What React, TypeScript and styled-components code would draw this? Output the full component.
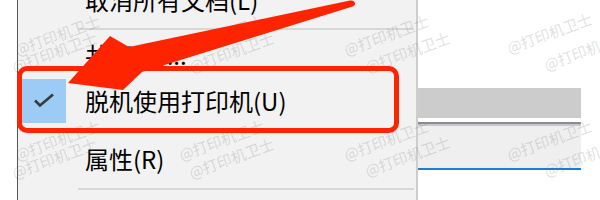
import styled, { createGlobalStyle } from 'styled-components';

const GlobalStyle = createGlobalStyle`
  html, body {
    margin: 0;
    padding: 0;
    background: #ffffff;
    overflow: hidden;
  }
`

const Stage = styled.div`
  position: relative;
  display: flex;
  align-items: flex-start;
  width: 600px;
  height: 200px;
  overflow: hidden;
  background: #ffffff;
  font-family: 'Noto Sans CJK SC', 'Noto Sans', sans-serif;
`

const Gutter = styled.div`
  flex: 0 0 17px;
`

const Menu = styled.div`
  flex: 0 0 398px;
  display: flex;
  flex-direction: column;
  height: 240px;
  margin-top: -25px;
  background: #f2f2f2;
  border-left: 1px solid #555555;
  border-right: 2px solid #cdcdcd;
`

const Item = styled.div<{ $h: number; $pt?: number }>`
  flex: 0 0 auto;
  display: flex;
  align-items: center;
  box-sizing: border-box;
  height: ${p => p.$h}px;
  padding-top: ${p => p.$pt ?? 0}px;
  padding-left: 4px;
  font-size: 24px;
  font-weight: 400;
  color: #000000;
  white-space: nowrap;
`

const CheckSlot = styled.div<{ $checked?: boolean }>`
  flex: 0 0 44px;
  height: 44px;
  display: flex;
  align-items: center;
  justify-content: center;
  background: ${p => (p.$checked ? '#9ccbf5' : 'transparent')};
`

const Label = styled.span`
  margin-left: 19px;
  line-height: 1;
`

const Separator = styled.div<{ $h: number; $pt: number }>`
  flex: 0 0 auto;
  height: ${p => p.$h}px;
  padding-top: ${p => p.$pt}px;
  box-sizing: border-box;
  padding-left: 60px;
  padding-right: 2px;

  &::after {
    content: '';
    display: block;
    height: 2px;
    background: #d7d7d7;
  }
`

const RightPane = styled.div`
  flex: 1;
  padding-top: 88px;
`

const Panel = styled.div`
  width: 163px;
  display: flex;
  flex-direction: column;
`

const Strip = styled.div<{ $h: number; $c: string }>`
  height: ${p => p.$h}px;
  background: ${p => p.$c};
`

const Highlight = styled.div`
  position: absolute;
  left: 17px;
  top: 66px;
  width: 382px;
  height: 67px;
  box-sizing: border-box;
  border: 5px solid #ff2400;
  border-radius: 10px;
`

const Overlay = styled.svg`
  position: absolute;
  left: 0;
  top: 0;
  width: 600px;
  height: 200px;
  pointer-events: none;
`

const Watermark = styled.span`
  position: absolute;
  font-family: 'Noto Sans CJK SC', 'Noto Sans', sans-serif;
  font-size: 15px;
  line-height: 1;
  color: rgba(90, 90, 100, 0.2);
  white-space: nowrap;
  transform: rotate(-20deg);
  transform-origin: 0 100%;
`

// two interleaved watermark grids, as in the screenshot
const marks = [
  [18, 57], [182, 57], [347, 57], [510, 55],
  [15, 74], [192, 74], [368, 74], [547, 72],
  [18, 162], [182, 162], [347, 162], [510, 162],
  [15, 180], [192, 180], [368, 178], [547, 178],
]

const Check = () => (
  <svg width="22" height="16" viewBox="0 0 22 16">
    <path d="M2 7.5 L7 12.5 L20 1.5" fill="none" stroke="#3a3a3a" strokeWidth="2.6" />
  </svg>
)

export default function App() {
  return (
    <>
      <GlobalStyle />
      <Stage>
        <Gutter />
        <Menu>
          <Item $h={50}>
            <CheckSlot />
            <Label>取消所有文档(L)</Label>
          </Item>
          <Separator $h={7} $pt={3} />
          <Item $h={46}>
            <CheckSlot />
            <Label>共享(H)...</Label>
          </Item>
          <Item $h={46}>
            <CheckSlot $checked>
              <Check />
            </CheckSlot>
            <Label>脱机使用打印机(U)</Label>
          </Item>
          <Item $h={60} $pt={10}>
            <CheckSlot />
            <Label>属性(R)</Label>
          </Item>
          <Separator $h={8} $pt={4} />
        </Menu>
        <RightPane>
          <Panel>
            <Strip $h={30} $c="#cccccc" />
            <Strip $h={4} $c="#ffffff" />
            <Strip $h={2} $c="#8a8c92" />
            <Strip $h={2} $c="#c8c8c8" />
            <Strip $h={42} $c="#efefef" />
            <Strip $h={2} $c="#1a7fd4" />
          </Panel>
        </RightPane>

        {marks.map(([x, y], i) => (
          <Watermark key={i} style={{ left: x, top: y - 15 }}>@打印机卫士</Watermark>
        ))}

        <Highlight />
        <Overlay viewBox="0 0 600 200">
          <path
            d="M68 83 L110 36 L129 47 L350 0.5 C356 -0.5 357 6 351 7 L142 72 L123 90 Z"
            fill="#ff2400"
            strokeLinejoin="round"
          />
        </Overlay>
      </Stage>
    </>
  );
}
